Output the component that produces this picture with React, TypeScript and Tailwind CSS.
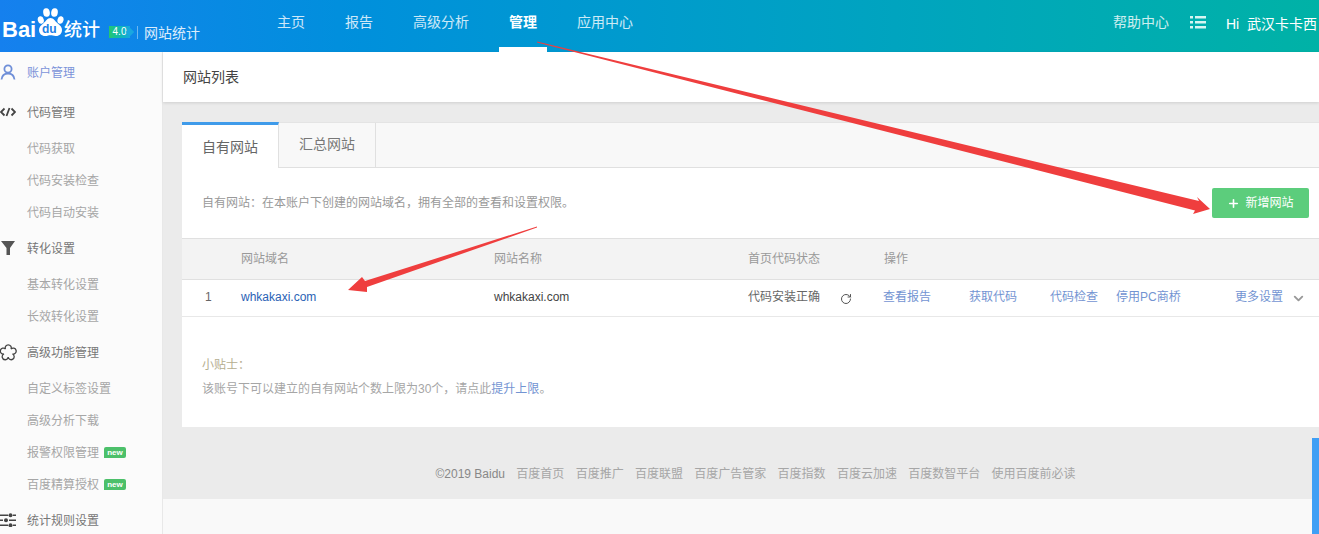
import React from "react";
import { ChevronDown, RotateCw, Plus } from "lucide-react";

const navItems = [
  { label: "主页", width: "w-[68px]" },
  { label: "报告", width: "w-[68px]" },
  { label: "高级分析", width: "w-[96px]" },
  { label: "管理", width: "w-[68px]", active: true },
  { label: "应用中心", width: "w-[96px]" },
];

const footerLinks = ["百度首页", "百度推广", "百度联盟", "百度广告管家", "百度指数", "百度云加速", "百度数智平台", "使用百度前必读"];

const NewBadge = () => (
  <span className="ml-[5px] inline-flex h-[11px] w-[22px] items-center justify-center rounded-[2px] rounded-bl-none bg-[#4cc06a] text-[8px] font-bold leading-none text-white">
    new
  </span>
);

const SubItem = ({ label, isNew }: { label: string; isNew?: boolean }) => (
  <div className="flex h-8 items-center pl-[27px] pt-px text-xs text-[#a6a6a6]">
    {label}
    {isNew && <NewBadge />}
  </div>
);

const Heading = ({ label, icon, active }: { label: string; icon: React.ReactNode; active?: boolean }) => (
  <div className={`flex h-10 items-center text-xs ${active ? "text-[#7b93d9]" : "text-[#777]"}`}>
    <span className="flex w-[27px] shrink-0 items-center">{icon}</span>
    <span className="pt-px">{label}</span>
  </div>
);

const Logo = () => (
  <div className="flex w-[277px] shrink-0 items-center pl-[2px] text-white">
    <span className="mt-[8px] w-[35px] font-['Liberation_Sans'] text-[22px] font-bold leading-none">Bai</span>
    <span className="relative -mt-[8px] h-[29px] w-[27px] shrink-0">
      <svg viewBox="0 0 27 29" className="absolute inset-0 h-full w-full" fill="#fff">
        <ellipse cx="3.800" cy="12" rx="3" ry="3.800" transform="rotate(-15 3.800 12)" />
        <ellipse cx="9.500" cy="4.500" rx="3.300" ry="4.300" transform="rotate(-8 9.500 4.500)" />
        <ellipse cx="17.500" cy="4.500" rx="3.300" ry="4.300" transform="rotate(8 17.500 4.500)" />
        <ellipse cx="23.500" cy="12" rx="3" ry="3.800" transform="rotate(15 23.500 12)" />
        <path d="M13.500 10c3.200 0 4.200 3 7 5.200 3 2.300 4.500 4.300 4.500 6.800 0 4-3.200 6.400-6.500 6-2-.2-3.300-.8-5-.8s-3 .7-5 .8c-3.300.3-6.500-2-6.500-6 0-2.500 1.500-4.500 4.500-6.800 2.800-2.200 3.800-5.200 7-5.200z" />
      </svg>
      <span className="absolute left-[5px] top-[15px] font-['Liberation_Sans'] text-[12px] font-bold leading-none text-[#1a80e6]">du</span>
    </span>
    <span className="mt-[8px] text-[18px] font-medium leading-none">统计</span>
    <span className="relative ml-[9px] mt-[11px] flex h-[12px] w-[21px] items-center justify-center bg-gradient-to-r from-[#25c76f] to-[#19a7e0] font-['Liberation_Sans'] text-[10px] leading-none text-white">
      4.0
      <span className="absolute -right-[3px] top-[3px] h-[6px] w-[6px] rotate-45 bg-[#19a7e0]" />
    </span>
    <span className="ml-[7px] mt-[12px] h-[13px] w-px bg-white/40" />
    <span className="ml-[6px] mt-[13px] text-sm leading-none text-white/85">网站统计</span>
  </div>
);

const Arrows = () => (
  <svg className="pointer-events-none absolute inset-0 h-[534px] w-[1319px]" viewBox="0 0 1319 534">
    <polygon points="537,41.500 1199,201 1197,197 1210,209 1193,214 1195,210.500 537,42.500" fill="#ef3e3e" />
    <polygon points="537,226.500 365,281 362,277 348,290 367,292 367,287 537,227.500" fill="#ef3e3e" />
  </svg>
);

export default function App() {
  return (
    <div className="relative h-[534px] w-[1319px] overflow-hidden bg-white font-['Liberation_Sans','Noto_Sans_CJK_SC',sans-serif]">
      <header className="flex h-[52px] items-stretch bg-gradient-to-r from-[#1580ee] to-[#00b2a6] text-white">
        <Logo />
        <nav className="flex">
          {navItems.map((item) => (
            <div key={item.label} className={`relative ${item.width} pt-[14px] text-sm leading-4 ${item.active ? "font-bold text-white" : "text-white/80"}`}>
              {item.label}
              {item.active && <span className="absolute -left-[10px] bottom-0 h-[5px] w-12 bg-white" />}
            </div>
          ))}
        </nav>
        <div className="ml-auto flex whitespace-nowrap pt-[14px] text-sm leading-4">
          <span className="text-white/80">帮助中心</span>
          <svg viewBox="0 0 16 14" className="ml-[21px] mt-px h-[14px] w-4" fill="#d6f5f2">
            <rect x="0" y="1" width="3" height="2.500" />
            <rect x="5" y="1" width="11" height="2.500" />
            <rect x="0" y="6" width="3" height="2.500" />
            <rect x="5" y="6" width="11" height="2.500" />
            <rect x="0" y="11" width="3" height="2.500" />
            <rect x="5" y="11" width="11" height="2.500" />
          </svg>
          <span className="ml-[20px] w-[93px] text-sm">
            Hi&nbsp;&nbsp;武汉卡卡西
          </span>
        </div>
      </header>

      <div className="flex h-[482px]">
        <aside className="w-[163px] shrink-0 overflow-hidden border-r border-[#e8e8e8] bg-[#fbfbfb]">
          <Heading
            active
            label="账户管理"
            icon={
              <svg viewBox="0 0 16 16" className="h-4 w-4" fill="none" stroke="#6f8fd8" strokeWidth="1.800">
                <circle cx="8" cy="5" r="3.600" />
                <path d="M1.500 15.500c.5-4 3-6 6.500-6s6 2 6.500 6" />
              </svg>
            }
          />
          <Heading
            label="代码管理"
            icon={
              <svg viewBox="0 0 16 10" className="h-[10px] w-4" fill="none" stroke="#444" strokeWidth="1.800">
                <path d="M4.500 1.500 1 5l3.500 3.500M11.500 1.500 15 5l-3.500 3.500M9.500 1 6.500 9" />
              </svg>
            }
          />
          <SubItem label="代码获取" />
          <SubItem label="代码安装检查" />
          <SubItem label="代码自动安装" />
          <Heading
            label="转化设置"
            icon={
              <svg viewBox="0 0 16 14" className="h-[14px] w-4" fill="#555">
                <path d="M1 0h14L10 7v7H6.500V7z" />
              </svg>
            }
          />
          <SubItem label="基本转化设置" />
          <SubItem label="长效转化设置" />
          <Heading
            label="高级功能管理"
            icon={
              <svg viewBox="0 0 17 17" className="h-[17px] w-[17px]" fill="none" stroke="#444" strokeWidth="1.300">
                <path d="M5.500 5A3 3 0 1 1 11 5 A3 3 0 1 1 12.500 10 A3 3 0 1 1 8.200 13 A3 3 0 1 1 4 10 A3 3 0 1 1 5.500 5z" />
              </svg>
            }
          />
          <SubItem label="自定义标签设置" />
          <SubItem label="高级分析下载" />
          <SubItem label="报警权限管理" isNew />
          <SubItem label="百度精算授权" isNew />
          <Heading
            label="统计规则设置"
            icon={
              <svg viewBox="0 0 16 14" className="h-[14px] w-4" fill="#444">
                <rect x="0" y="1.500" width="8" height="1.500" />
                <circle cx="10.500" cy="2.200" r="2" />
                <rect x="13" y="1.500" width="3" height="1.500" />
                <rect x="0" y="6.500" width="3" height="1.500" />
                <circle cx="6" cy="7.200" r="2" />
                <rect x="9" y="6.500" width="7" height="1.500" />
                <rect x="0" y="11.500" width="8" height="1.500" />
                <circle cx="10.500" cy="12.200" r="2" />
                <rect x="13" y="11.500" width="3" height="1.500" />
              </svg>
            }
          />
        </aside>

        <main className="min-w-0 flex-1 bg-[#ebebeb]">
          <div className="flex h-[50px] items-center bg-white pl-[20px] text-sm text-[#444] shadow-[0_1px_3px_rgba(0,0,0,0.12)]">
            网站列表
          </div>

          <section className="ml-[19px] mt-5 h-[305px] bg-white">
            <div className="flex h-[46px] border-y border-[#e4e4e4] bg-[#f8f8f8] border-b-[#e0e0e0]">
              <div className="-mt-px flex h-[46px] w-[97px] items-center justify-center border-r border-[#e0e0e0] border-t-[3px] border-t-[#3f9bea] bg-white text-sm text-[#666]">
                自有网站
              </div>
              <div className="flex w-[97px] items-center justify-center border-r border-[#e0e0e0] pb-[2px] text-sm text-[#777]">
                汇总网站
              </div>
            </div>

            <div className="flex h-[70px] items-center justify-between pl-[20px] pr-[10px] text-xs text-[#999]">
              <span>自有网站：在本账户下创建的网站域名，拥有全部的查看和设置权限。</span>
              <button className="flex h-[30px] w-[97px] items-center justify-center rounded-[2px] bg-[#5ccd7c] text-xs text-white">
                <Plus size={13} strokeWidth={3} className="mr-[5px]" />
                新增网站
              </button>
            </div>

            <div className="grid h-[42px] grid-cols-[59px_253px_254px_135px_1fr] items-center border-y border-[#e0e0e0] bg-[#f3f3f3] pb-px text-xs text-[#999]">
              <span />
              <span>网站域名</span>
              <span>网站名称</span>
              <span>首页代码状态</span>
              <span className="pl-px">操作</span>
            </div>

            <div className="grid h-[37px] grid-cols-[59px_253px_254px_135px_1fr] items-center border-b border-[#e8e8e8] pb-[2px] text-xs text-[#444]">
              <span className="pl-[23px] text-[#666]">1</span>
              <a className="text-[#2a62b5]">whkakaxi.com</a>
              <span>whkakaxi.com</span>
              <span className="flex items-center text-[#666]">
                代码安装正确
                <RotateCw size={12} strokeWidth={2} className="ml-[20px] mt-[3px] text-[#555]" />
              </span>
              <span className="flex items-center text-[#7394d2]">
                <span className="w-[86px]">查看报告</span>
                <span className="w-[81px]">获取代码</span>
                <span className="w-[66px]">代码检查</span>
                <span className="w-[119px]">停用PC商桥</span>
                <span className="w-[56px]">更多设置</span>
                <ChevronDown size={15} strokeWidth={3} className="mt-[3px] text-[#999]" />
              </span>
            </div>

            <div className="pl-5 pt-10 text-xs leading-4">
              <p className="text-[#b5ae90]">小贴士：</p>
              <p className="mt-2 text-[#a6a6a6]">
                该账号下可以建立的自有网站个数上限为30个，请点此<a className="text-[#7394d2]">提升上限</a>。
              </p>
            </div>
          </section>

          <footer className="flex h-[72px] items-center justify-center gap-[11.3px] pl-[29px] pt-[22px] text-xs text-[#a6a6a6]">
            <span className="text-[#888]">©2019 Baidu</span>
            {footerLinks.map((link) => (
              <span key={link}>{link}</span>
            ))}
          </footer>
          <div className="h-[35px] bg-[#f9f9f9]" />
        </main>
      </div>

      <Arrows />
      <div className="absolute bottom-0 right-0 h-[96px] w-[7px] bg-[#3f9ff5]" />
    </div>
  );
}
